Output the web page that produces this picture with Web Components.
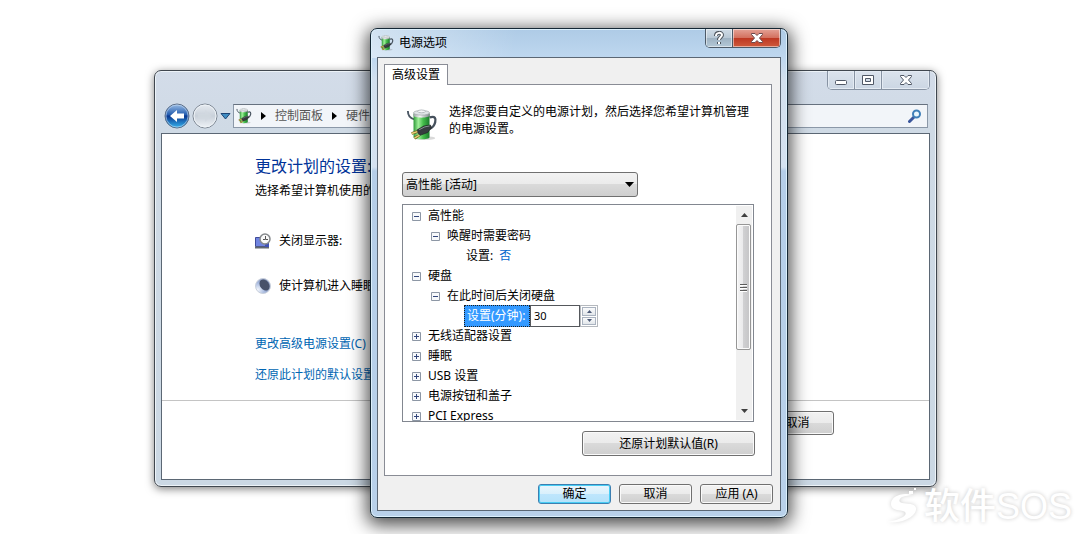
<!DOCTYPE html>
<html lang="zh-CN">
<head>
<meta charset="utf-8">
<title>电源选项</title>
<style>
    body {
        margin: 0;
        background: #fff;
        color: #000;
        font: 12px/20px "Noto Sans", "Noto Sans CJK SC", sans-serif;
    }
</style>
</head>
<body>
<power-desktop></power-desktop>

<script>
(function () {
    function define(name, html) {
        const tmpl = document.createElement('template');
        tmpl.innerHTML = html;
        customElements.define(name, class extends HTMLElement {
            constructor() {
                super();
                this.attachShadow({mode: 'open'}).appendChild(tmpl.content.cloneNode(true));
            }
        });
    }

    // Battery with a power cord
    define('battery-icon', `
        <style>
            :host { display: block; flex: none; width: 16px; height: 16px; }
            svg { display: block; width: 100%; height: 100%; }
        </style>
        <svg viewBox="0 0 34 34" aria-hidden="true">
            <defs>
                <linearGradient id="g" x1="0" x2="1">
                    <stop offset="0" stop-color="#2d9a38"/><stop offset=".3" stop-color="#a0f09a"/>
                    <stop offset=".6" stop-color="#45bd4b"/><stop offset="1" stop-color="#1a7a2c"/>
                </linearGradient>
                <linearGradient id="c" x1="0" x2="1">
                    <stop offset="0" stop-color="#9aa0a3"/><stop offset=".4" stop-color="#f6f8f8"/>
                    <stop offset="1" stop-color="#7c8488"/>
                </linearGradient>
            </defs>
            <ellipse cx="20" cy="31" rx="11" ry="2" fill="#000" opacity=".15"/>
            <path d="M2 2C2 7 5 10 9 11" fill="none" stroke="#4b5764" stroke-width="2"/>
            <path d="M25 9c6-2 7 1 6 5s-3 6-6 7" fill="none" stroke="#46515d" stroke-width="2.500"/>
            <path d="M8 5v25c0 3 17 3 17 0V5z" fill="url(#g)"/>
            <path d="M8 4v3c0 3 17 3 17 0V4z" fill="url(#c)"/>
            <ellipse cx="16.500" cy="4" rx="8.500" ry="2.500" fill="#dfe4e6" stroke="#92999c" stroke-width=".6"/>
            <ellipse cx="16.500" cy="2.500" rx="4" ry="1.500" fill="#f4f6f7" stroke="#939a9e" stroke-width=".6"/>
            <path d="M12 22l7-4 7-1 1 3-4 5-8 3-3-3z" fill="#363b3f" stroke="#15181a" stroke-width=".6"/>
            <path d="M14 22l6-3 5-1" stroke="#8c9396" fill="none"/>
            <path d="M12 24l-6 2M14 28l-5 3" stroke="#745c1b" stroke-width="3"/>
            <path d="M12 24l-6 2M14 28l-5 3" stroke="#ead37a" stroke-width="1.500"/>
        </svg>
    `);

    define('win-button', `
        <style>
            :host { display: block; flex: none; width: 73px; height: 20px; }
            button {
                box-sizing: border-box;
                display: block;
                width: 100%;
                height: 100%;
                padding: 0;
                border: 1px solid #707070;
                border-radius: 3px;
                box-shadow: inset 0 0 0 1px #fafafa;
                background: linear-gradient(#f2f2f2 0%, #ebebeb 49%, #dadada 50%, #cfcfcf 100%);
                color: inherit;
                font: inherit;
                line-height: 16px;
            }
            :host([default]) button {
                border-color: #3c7fb1;
                box-shadow: inset 0 0 0 1px #48cdf4;
                background: linear-gradient(#eaf6fd 0%, #d9f0fc 49%, #bee6fd 50%, #b4e2fa 100%);
            }
        </style>
        <button type="button"><slot></slot></button>
    `);

    define('glass-window', `
        <style>
            :host {
                box-sizing: border-box;
                display: flex;
                flex-direction: column;
                padding: 0 6px 6px;
                border: 1px solid #40474f;
                border-radius: 7px;
                background: linear-gradient(#d3dce9, #cfdae5 60px, #cbd8e4);
                box-shadow: inset 0 0 0 1px #edf3f8, 0 2px 9px rgba(0, 0, 0, .5);
            }
            :host([active]) {
                border-color: #152734;
                background:
                    linear-gradient(100deg, rgba(255, 255, 255, .45), rgba(255, 255, 255, 0) 35%) 0 0 / 100% 29px no-repeat,
                    linear-gradient(#aecbe6, #bed7ef 28px, #d2e0ee 50px, #d5e2f0 138px, #b5cee8 142px, #b9d1ea);
                box-shadow: inset 0 0 0 1px #dcf0fc, 0 4px 18px 3px rgba(0, 0, 0, .7);
            }
            header { display: flex; align-items: flex-start; height: 28px; }
            .title { display: flex; align-items: center; gap: 5px; flex: 1; padding-left: 1px; height: 28px; }
            .body {
                border: 1px solid #5b6774;
                flex: 1;
                display: flex;
                flex-direction: column;
                background: #fff;
            }
            :host([active]) .body { background: #f0f0f0; }
        </style>
        <header><div class="title"><slot name="title"></slot></div><slot name="controls"></slot></header>
        <slot name="toolbar"></slot>
        <div class="body"><slot></slot></div>
    `);

    // Minimise / maximise / close of the window in the background
    define('caption-buttons', `
        <style>
            :host { display: flex; height: 18px; border: 1px solid #8793a3; border-top: 0; border-radius: 0 0 5px 5px; overflow: hidden; }
            button {
                display: grid;
                place-items: center;
                width: 27px;
                padding: 0;
                border: 0;
                border-right: 1px solid #8793a3;
                background: linear-gradient(#dbe3ed, #cbd6e3);
                box-shadow: inset 0 0 0 1px #e4ebf3;
            }
            button:last-child { width: 47px; border: 0; }
        </style>
        <button type="button" aria-label="最小化"><svg width="14" height="12"><rect x="1.500" y="6.500" width="11" height="4" rx="1" fill="#fff" stroke="#505866"/></svg></button>
        <button type="button" aria-label="最大化"><svg width="14" height="12"><path d="M1.500 1.500h11v9h-11zM4.500 4.500v3h5v-3z" fill="#fff" fill-rule="evenodd" stroke="#505866"/></svg></button>
        <button type="button" aria-label="关闭"><svg width="14" height="12"><path d="M1.500 1.500h3.500l2 2 2-2h3.500v1L9.500 6l3 3.500v1H9l-2-2-2 2H1.500v-1L4.500 6l-3-3.500z" fill="#fff" stroke="#505866"/></svg></button>
    `);

    define('dialog-buttons', `
        <style>
            :host { display: flex; height: 18px; border: 1px solid #4c5a68; border-top: 0; border-radius: 0 0 5px 5px; overflow: hidden; }
            button {
                display: grid;
                place-items: center;
                width: 27px;
                padding: 0;
                border: 0;
                border-right: 1px solid #4c5a68;
                background: linear-gradient(#d0dce6 0%, #b8c8d5 49%, #9db1c1 50%, #b3c8d7 100%);
                box-shadow: inset 0 0 0 1px rgba(255, 255, 255, .5);
            }
            button:last-child {
                width: 47px;
                border: 0;
                background: linear-gradient(#e4a397 0%, #d3705e 49%, #bd3722 50%, #cf5a3c 100%);
            }
        </style>
        <button type="button" aria-label="帮助"><svg width="12" height="14"><path d="M3 5c0-4 6-4 6-1 0 2-3 2-3 5M6 11v2" fill="none" stroke="#4d545c" stroke-width="4"/><path d="M3 5c0-4 6-4 6-1 0 2-3 2-3 5M6 11v2" fill="none" stroke="#fff" stroke-width="2"/></svg></button>
        <button type="button" aria-label="关闭"><svg width="14" height="12"><path d="M1.500 1.500h3.500l2 2 2-2h3.500v1L9.500 6l3 3.500v1H9l-2-2-2 2H1.500v-1L4.500 6l-3-3.500z" fill="#fff" stroke="#6c4a4c"/></svg></button>
    `);

    define('nav-bar', `
        <style>
            :host { display: flex; align-items: center; height: 34px; padding-right: 2px; }
            button { padding: 0; border: 0; background: none; height: 26px; }
            svg { display: block; }
            .arrows { display: flex; gap: 2px; padding: 0 2px 0 3px; border-radius: 13px; }
            .history { width: 12px; }
            .box {
                box-sizing: border-box;
                display: flex;
                align-items: center;
                height: 24px;
                border: 1px solid #8b98a8;
                border-top-color: #66717f;
                background: #f2f5f9;
                color: #555;
            }
            .path { flex: 1; margin-left: 1px; padding-left: 2px; gap: 9px; }
            .search { width: 180px; margin-left: 8px; padding-right: 5px; }
            input { flex: 1; min-width: 0; border: 0; padding: 0 4px; background: none; font: inherit; outline: 0; }
        </style>
        <div class="arrows">
            <button type="button" aria-label="后退"><svg width="26" height="26">
                <defs><linearGradient id="b" x2="0" y2="1"><stop offset="0" stop-color="#9dbfe6"/><stop offset=".45" stop-color="#245daf"/><stop offset=".5" stop-color="#0a368e"/><stop offset="1" stop-color="#35b6f0"/></linearGradient></defs>
                <circle cx="13" cy="13" r="12" fill="url(#b)" stroke="#5d6f88"/>
                <circle cx="13" cy="13" r="11" fill="none" stroke="#c5d9ee" opacity=".6"/>
                <path d="M6 13l7-6v3.500h7v5h-7V19z" fill="#fff"/></svg></button>
            <button type="button" aria-label="前进"><svg width="26" height="26">
                <defs><linearGradient id="f" x2="0" y2="1"><stop offset="0" stop-color="#e6ebf1"/><stop offset=".5" stop-color="#c9d1da"/><stop offset="1" stop-color="#eff3f7"/></linearGradient></defs>
                <circle cx="13" cy="13" r="12" fill="url(#f)" stroke="#7e8894"/>
                <circle cx="13" cy="13" r="11" fill="none" stroke="#eef3f7"/>
                <path d="M20 13l-7-6v4H6v4h7v4z" fill="#d2d9e0" opacity=".7"/></svg></button>
        </div>
        <button class="history" type="button" aria-label="历史"><svg width="11" height="26"><path d="M1 10.500h9L5.500 16z" fill="#3f8cc2" stroke="#1c4475"/></svg></button>
        <div class="box path">
            <battery-icon></battery-icon>
            <svg width="5" height="8"><path d="M0 0l5 4-5 4z" fill="#000"/></svg>
            <span>控制面板</span>
            <svg width="5" height="8"><path d="M0 0l5 4-5 4z" fill="#000"/></svg>
            <span>硬件</span>
        </div>
        <div class="box search">
            <input type="text" aria-label="搜索">
            <svg width="14" height="14"><path d="M1.500 12.500L6 8" stroke="#3a569c" stroke-width="3" stroke-linecap="round"/><circle cx="8.500" cy="5" r="3.500" fill="#eaf6fc" stroke="#3f7fb8" stroke-width="2"/></svg>
        </div>
    `);

    define('plan-page', `
        <style>
            :host { display: flex; flex-direction: column; height: 345px; }
            main { display: flex; flex-direction: column; align-items: flex-start; height: 267px; box-sizing: border-box; padding: 20px 0 0 93px; border-bottom: 1px solid #c4c4c4; }
            h1 { margin: 0; font-size: 16px; font-weight: 400; line-height: 24px; color: #003399; }
            p { margin: 0; padding-top: 3px; }
            .row { display: flex; align-items: center; gap: 8px; height: 20px; margin-top: 25px; }
            .row.first { margin-top: 30px; }
            a { color: #0066b3; text-decoration: none; margin-top: 11px; }
            a.first { margin-top: 38px; }
            footer { display: flex; justify-content: flex-end; padding: 10px 95px 0 0; }
            win-button { height: 24px; }
        </style>
        <main>
            <h1>更改计划的设置:</h1>
            <p>选择希望计算机使用的</p>
            <div class="row first">
                <svg width="16" height="16"><path d="M.500 4.500h11v9H.500z" fill="#7084e0" stroke="#3f4a9a"/><path d="M0 14.500h14" stroke="#60676e" stroke-width="2"/><path d="M10 10h4v4h-4z" fill="#3f51b5"/><circle cx="10" cy="6" r="5" fill="#fafafa" stroke="#85898c" stroke-width="1.500"/><path d="M10.500 3v3.500H13M8 6.500h2" fill="none" stroke="#555"/></svg>
                <span>关闭显示器:</span>
            </div>
            <div class="row">
                <svg width="16" height="16"><defs><radialGradient id="m" cx=".15" cy=".75" r=".9"><stop offset="0" stop-color="#f2f6fc"/><stop offset=".5" stop-color="#a9bbe0"/><stop offset="1" stop-color="#7f8fb6"/></radialGradient></defs><circle cx="8" cy="8" r="7.500" fill="url(#m)" stroke="#c9d0dc"/><ellipse cx="9.500" cy="7" rx="4.500" ry="6" transform="rotate(-35 9.500 7)" fill="#48526a"/></svg>
                <span>使计算机进入睡眠</span>
            </div>
            <a class="first" href="#">更改高级电源设置(C)</a>
            <a href="#">还原此计划的默认设置</a>
        </main>
        <footer><win-button>取消</win-button></footer>
    `);

    define('tree-row', `
        <style>
            :host { display: flex; align-items: center; height: 20px; padding-left: 9px; white-space: nowrap; }
            :host([level="2"]) { padding-left: 28px; }
            :host([level="3"]) { padding-left: 63px; }
            button { padding: 0; border: 0; margin-right: 7px; background: none; line-height: 0; }
            :host([level="3"]) button { display: none; }
            :host([open]) .bar { display: none; }
        </style>
        <button type="button" aria-label="展开或折叠"><svg width="9" height="9"><path d="M.5.500h8v8h-8z" fill="#f7f9fb" stroke="#8d97a5"/><path d="M2 4.500h5" stroke="#34477b"/><path class="bar" d="M4.500 2v5" stroke="#34477b"/></svg></button>
        <slot></slot>
    `);

    define('minute-spinner', `
        <style>
            :host { display: flex; height: 22px; }
            label {
                box-sizing: border-box;
                width: 66px;
                padding: 0 2px;
                border: 1px dotted #1c1c1c;
                background: #3399ff;
                color: #fff;
                line-height: 20px;
            }
            input {
                box-sizing: border-box;
                width: 50px;
                padding: 0 3px;
                border: 1px solid #55585c;
                font: 11px/20px "Noto Sans", sans-serif;
                outline: 0;
            }
            .arrows { display: grid; grid-template-rows: 1fr 1fr; gap: 1px; width: 14px; padding: 1px; border: 1px solid #b5b9be; }
            button { display: grid; place-items: center; padding: 0; border: 1px solid #aab3c0; background: linear-gradient(#fafbfc, #e2e6ea); }
            svg { display: block; }
        </style>
        <label for="minutes">设置(分钟):</label>
        <input id="minutes" type="text" value="30">
        <div class="arrows">
            <button type="button" aria-label="增加"><svg width="5" height="3"><path d="M0 3l2.500-3L5 3z" fill="#4d5a78"/></svg></button>
            <button type="button" aria-label="减少"><svg width="5" height="3"><path d="M0 0l2.500 3L5 0z" fill="#4d5a78"/></svg></button>
        </div>
    `);

    define('scroll-bar', `
        <style>
            :host { display: flex; flex-direction: column; flex: none; width: 16px; margin: 1px; background: #f0f0f0; }
            button { display: grid; place-items: center; height: 18px; padding: 0; border: 0; background: none; }
            .track { flex: 1; }
            .thumb {
                box-sizing: border-box;
                display: grid;
                place-items: center;
                height: 71%;
                margin-right: 1px;
                border: 1px solid #969696;
                border-radius: 2px;
                background: linear-gradient(90deg, #f5f5f5 0%, #e9e9eb 49%, #d0d0d2 50%, #c4c4c6 100%);
                box-shadow: inset 0 0 0 1px #fbfbfb;
            }
        </style>
        <button type="button" aria-label="向上滚动"><svg width="7" height="4"><path d="M0 4l3.500-4L7 4z" fill="#404040"/></svg></button>
        <div class="track"><div class="thumb"><svg width="7" height="9"><path d="M0 1.500h7M0 4.500h7M0 7.500h7" stroke="#5c5c5c"/><path d="M0 2.500h7M0 5.500h7M0 8.500h7" stroke="#fff"/></svg></div></div>
        <button type="button" aria-label="向下滚动"><svg width="7" height="4"><path d="M0 0l3.500 4L7 0z" fill="#404040"/></svg></button>
    `);

    define('settings-tree', `
        <style>
            :host { display: flex; height: 216px; border: 1px solid #828790; background: #fff; overflow: hidden; }
            .rows { flex: 1; min-width: 0; padding-top: 1px; }
            minute-spinner { margin-left: -2px; }
            a { margin-left: 6px; color: #0066cc; text-decoration: none; }
        </style>
        <div class="rows">
            <tree-row open>高性能</tree-row>
            <tree-row level="2" open>唤醒时需要密码</tree-row>
            <tree-row level="3">设置: <a href="#">否</a></tree-row>
            <tree-row open>硬盘</tree-row>
            <tree-row level="2" open>在此时间后关闭硬盘</tree-row>
            <tree-row level="3"><minute-spinner></minute-spinner></tree-row>
            <tree-row>无线适配器设置</tree-row>
            <tree-row>睡眠</tree-row>
            <tree-row>USB 设置</tree-row>
            <tree-row>电源按钮和盖子</tree-row>
            <tree-row>PCI Express</tree-row>
        </div>
        <scroll-bar></scroll-bar>
    `);

    define('options-page', `
        <style>
            :host { display: block; padding: 6px 8px 6px 6px; }
            .tab {
                position: relative;
                box-sizing: border-box;
                display: block;
                width: 64px;
                height: 21px;
                margin-bottom: -1px;
                padding: 0;
                border: 1px solid #898c95;
                border-bottom: 0;
                background: #fff;
                color: inherit;
                font: inherit;
            }
            .panel { border: 1px solid #898c95; background: #fff; padding: 23px 17px 19px; }
            .intro { display: flex; gap: 11px; height: 64px; padding-left: 4px; box-sizing: border-box; }
            .intro battery-icon { width: 32px; height: 34px; }
            .intro p { margin: -5px 0 0; line-height: 17px; }
            select {
                box-sizing: border-box;
                display: block;
                width: 100%;
                height: 25px;
                margin-bottom: 7px;
                padding: 0 3px;
                border: 1px solid #707070;
                border-radius: 3px;
                appearance: none;
                background: linear-gradient(#f2f2f2 0%, #ebebeb 49%, #dadada 50%, #cfcfcf 100%);
                color: inherit;
                font: inherit;
            }
            /* the arrow lies over the select's right end */
            .combo { position: relative; width: 236px; }
            .combo svg { position: absolute; right: 4px; top: 10px; pointer-events: none; }
            .restore { display: flex; justify-content: flex-end; padding-top: 9px; margin-right: -1px; }
            .restore win-button { width: 173px; height: 25px; }
            footer { display: flex; justify-content: flex-end; gap: 8px; padding-top: 8px; margin-right: -1px; }
        </style>
        <button class="tab" type="button">高级设置</button>
        <div class="panel">
            <div class="intro">
                <battery-icon></battery-icon>
                <p>选择您要自定义的电源计划，然后选择您希望计算机管理的电源设置。</p>
            </div>
            <div class="combo">
                <select aria-label="电源计划"><option>高性能 [活动]</option></select>
                <svg width="9" height="5"><path d="M0 0h9L4.500 5z"/></svg>
            </div>
            <settings-tree></settings-tree>
            <div class="restore"><win-button>还原计划默认值(R)</win-button></div>
        </div>
        <footer>
            <win-button default>确定</win-button>
            <win-button>取消</win-button>
            <win-button>应用 (A)</win-button>
        </footer>
    `);

    define('site-mark', `
        <style>
            :host {
                display: flex;
                align-items: center;
                gap: 4px;
                color: #fff;
                font: 36px/40px "Liberation Sans", "Noto Sans CJK SC", sans-serif;
                text-shadow: 0 0 4px rgba(0, 0, 0, .22);
            }
            svg { filter: drop-shadow(0 0 2px rgba(0, 0, 0, .18)); }
            b { font-weight: 500; }
        </style>
        <svg width="32" height="38"><path d="M25 7C13 4 3 9 3 16c0 5 5 6 12 7 4 1 3 4 0 6-4 2-9 4-15 5 13 2 29-5 28-14-1-5-9-4-14-5-4-1-3-4 0-6 3-1 7-2 11-2z" fill="#fff"/><path d="M21 3h4v3h-4zM26 0h2v2h-2z" fill="#fff"/></svg>
        <span><b>软件</b>SOS</span>
    `);

    define('power-desktop', `
        <style>
            :host { display: block; position: relative; min-height: 100vh; overflow: hidden; }
            /* windows and the mark are placed freely on the desktop */
            .back { position: absolute; left: 154px; right: 149px; top: 70px; }
            .front { position: absolute; left: 370px; right: 298px; top: 28px; }
            site-mark { position: absolute; right: 14px; bottom: 7px; }
        </style>
        <glass-window class="back">
            <caption-buttons slot="controls"></caption-buttons>
            <nav-bar slot="toolbar"></nav-bar>
            <plan-page></plan-page>
        </glass-window>
        <glass-window class="front" active>
            <battery-icon slot="title"></battery-icon>
            <span slot="title">电源选项</span>
            <dialog-buttons slot="controls"></dialog-buttons>
            <options-page></options-page>
        </glass-window>
        <site-mark></site-mark>
    `);
})();
</script>
</body>
</html>
